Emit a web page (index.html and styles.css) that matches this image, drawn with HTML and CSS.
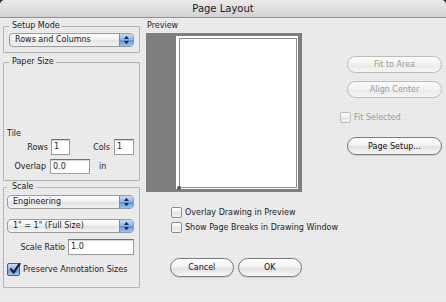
FILE: index.html
```html
<!DOCTYPE html>
<html lang="en">
<head>
    <meta charset="UTF-8">
    <title>Page Layout</title>
    <link rel="stylesheet" href="styles.css">
</head>
<body>
    <div class="window">
        <div class="titlebar">Page Layout</div>
        <div class="content">
            <div class="left-col">
                <fieldset class="group setup-group">
                    <legend>Setup Mode</legend>
                    <div class="popup"><span class="popup-text">Rows and Columns</span><span class="popup-arrows"><svg width="14" height="14" viewBox="0 0 14 14"><path d="M7 2.5 L4.3 6 L9.7 6 Z M4.3 8 L9.7 8 L7 11.5 Z" fill="#1c2c4c"/></svg></span></div>
                </fieldset>
                <fieldset class="group paper-group">
                    <legend>Paper Size</legend>
                    <div class="tile-label">Tile</div>
                    <div class="field-row rows-row">
                        <span class="lbl lbl-rows">Rows</span><span class="text-input in-rows">1</span>
                        <span class="lbl lbl-cols">Cols</span><span class="text-input in-cols">1</span>
                    </div>
                    <div class="field-row overlap-row">
                        <span class="lbl lbl-overlap">Overlap</span><span class="text-input in-overlap">0.0</span><span class="unit">in</span>
                    </div>
                </fieldset>
                <fieldset class="group scale-group">
                    <legend>Scale</legend>
                    <div class="popup"><span class="popup-text">Engineering</span><span class="popup-arrows"><svg width="14" height="14" viewBox="0 0 14 14"><path d="M7 2.5 L4.3 6 L9.7 6 Z M4.3 8 L9.7 8 L7 11.5 Z" fill="#1c2c4c"/></svg></span></div>
                    <div class="popup popup-second"><span class="popup-text">1" = 1" (Full Size)</span><span class="popup-arrows"><svg width="14" height="14" viewBox="0 0 14 14"><path d="M7 2.5 L4.3 6 L9.7 6 Z M4.3 8 L9.7 8 L7 11.5 Z" fill="#1c2c4c"/></svg></span></div>
                    <div class="field-row ratio-row">
                        <span class="lbl lbl-ratio">Scale Ratio</span><span class="text-input in-ratio">1.0</span>
                    </div>
                    <div class="check-row preserve-row">
                        <span class="checkbox checked"><svg width="13" height="13" viewBox="0 0 13 13"><path d="M3 6.2 L5.6 9.6 L11.5 0.8" fill="none" stroke="#14213d" stroke-width="2.2" stroke-linecap="round" stroke-linejoin="round"/></svg></span>
                        <span>Preserve Annotation Sizes</span>
                    </div>
                </fieldset>
            </div>

            <div class="mid-col">
                <div class="preview-label">Preview</div>
                <div class="preview-area">
                    <div class="page">
                        <div class="page-inner"><span class="origin-dot"></span></div>
                    </div>
                </div>
                <div class="mid-checks">
                    <div class="check-row"><span class="checkbox"></span><span>Overlay Drawing in Preview</span></div>
                    <div class="check-row"><span class="checkbox"></span><span>Show Page Breaks in Drawing Window</span></div>
                </div>
                <div class="button-row">
                    <button class="btn btn-cancel">Cancel</button>
                    <button class="btn btn-ok">OK</button>
                </div>
            </div>

            <div class="right-col">
                <button class="btn btn-side disabled btn-fit">Fit to Area</button>
                <button class="btn btn-side disabled btn-align">Align Center</button>
                <div class="check-row fit-row disabled"><span class="checkbox"></span><span>Fit Selected</span></div>
                <button class="btn btn-side btn-setup">Page Setup...</button>
            </div>
        </div>
    </div>
</body>
</html>
```

FILE: styles.css
```css
* { box-sizing: border-box; }
html, body { margin: 0; padding: 0; background-color: #2a2a2a; }
body { font-family: "DejaVu Sans", sans-serif; font-size: 8px; color: #1c1c1c; }

.window { width: 446px; height: 302px; overflow: hidden; border-radius: 5px 5px 0 0; background: repeating-linear-gradient(#eeeeee 0 1px, #e6e6e6 1px 2px); }
.titlebar { height: 18px; line-height: 17px; border-bottom: 1px solid #8f8f8f; background: linear-gradient(#ebebeb, #d2d2d2); text-align: center; font-size: 10px; color: #1a1a1a; }

.content { display: flex; padding: 3px 0 0 3px; }

/* left column: group boxes */
.left-col { width: 137px; flex: none; display: flex; flex-direction: column; }
.group { margin: 0; min-width: 0; border: 1px solid #b4b4b4; border-radius: 1px; padding: 2px 5px 5px 5px; }
.group legend { padding: 0 2px 0 3px; line-height: 10px; height: 10px; color: #222; }
.paper-group { margin-top: 4px; padding-bottom: 6px; }
.scale-group { margin-top: 1px; padding: 3px 5px 11px 3px; }
.scale-group legend { padding-left: 5px; }

.popup { display: flex; height: 14px; border: 1px solid #9a9a9a; border-radius: 4px; background: linear-gradient(#ffffff, #f1f1f1 50%, #e3e3e3 51%, #f3f3f3); overflow: hidden; white-space: nowrap; }
.popup-text { flex: 1; padding-left: 5px; line-height: 12px; }
.popup-arrows { width: 14px; border-left: 1px solid #6d8fc0; background: linear-gradient(#c4dbf7, #8ab4ea 50%, #5b92dc 51%, #9cc3f1); display: flex; align-items: center; justify-content: center; }
.popup-arrows svg { display: block; }
.popup-second { margin-top: 10px; }

.tile-label { margin: 60px 0 0 -2px; line-height: 10px; height: 10px; }
.field-row { display: flex; align-items: center; white-space: nowrap; }
.rows-row { height: 16px; }
.overlap-row { height: 15px; margin-top: 4px; }
.ratio-row { height: 16px; margin-top: 6px; }
.lbl { text-align: right; }
.lbl-rows { width: 39px; margin-right: 3px; }
.lbl-cols { width: 40px; margin-right: 4px; }
.lbl-overlap { width: 37px; margin-right: 4px; }
.lbl-ratio { width: 58px; margin-right: 3px; }
.text-input { height: 100%; background: #fff; border: 1px solid #9c9c9c; border-top-color: #6f6f6f; box-shadow: inset 0 1px 0 #d8d8d8; padding: 0 2px; line-height: 13px; }
.in-rows { width: 19px; }
.in-cols { width: 20px; }
.in-overlap { width: 40px; }
.in-ratio { flex: 1; }
.unit { margin-left: 9px; }

.check-row { display: flex; align-items: center; white-space: nowrap; }
.checkbox { width: 11px; height: 11px; border: 1px solid #8e8e8e; border-radius: 2px; background: linear-gradient(#ffffff, #ececec 50%, #e0e0e0 51%, #f6f6f6); margin-right: 3px; flex: none; }
.checkbox.checked { width: 13px; height: 13px; border-color: #3f5d8f; background: linear-gradient(#c9defa, #86b2ea 50%, #5a90db 51%, #a3c7f2); position: relative; }
.checkbox.checked svg { position: absolute; left: 0; top: -1px; }
.preserve-row { margin-top: 8px; height: 13px; }

/* middle column: preview */
.mid-col { width: 156px; flex: none; margin-left: 6px; }
.preview-label { line-height: 10px; height: 10px; padding-left: 1px; }
.preview-area { margin-top: 2px; height: 159px; background-color: #7e7e7e; padding: 3px 4px 0 30px; }
.page { width: 122px; height: 153px; background: #fff; padding: 2px 1px 1px 3px; }
.page-inner { width: 100%; height: 100%; border: 1px solid #8d8d8d; position: relative; }
.origin-dot { position: absolute; left: -3px; bottom: -3px; width: 4px; height: 4px; border-radius: 50%; background: #555; }
.mid-checks { margin-top: 15px; padding-left: 25px; display: flex; flex-direction: column; gap: 4px; }
.mid-checks .check-row { height: 11px; }
.button-row { margin-top: 25px; padding-left: 24px; display: flex; gap: 4px; }

.btn { font-family: "DejaVu Sans", sans-serif; font-size: 8px; color: #111; height: 19px; padding: 0; border: 1px solid #7b7b7b; border-radius: 10px; background: linear-gradient(#ffffff, #f3f3f3 45%, #e2e2e2 55%, #f7f7f7); box-shadow: 0 1px 1px rgba(0,0,0,0.12); }
.btn-cancel { width: 77px; }
.btn-ok { width: 78px; }

/* right column */
.right-col { width: 102px; flex: none; margin-left: 38px; display: flex; flex-direction: column; align-items: flex-start; }
.btn-side { width: 95px; height: 17px; margin-left: 7px; border-radius: 9px; }
.btn-fit { margin-top: 35px; }
.btn-align { margin-top: 8px; }
.btn.disabled { color: #9c9c9c; border-color: #bcbcbc; background: linear-gradient(#fbfbfb, #f1f1f1 50%, #e9e9e9 51%, #f5f5f5); box-shadow: none; }
.fit-row { margin-top: 14px; height: 11px; }
.fit-row.disabled { color: #9c9c9c; }
.fit-row.disabled .checkbox { border-color: #bdbdbd; }
.btn-setup { margin-top: 14px; height: 18px; }
```
